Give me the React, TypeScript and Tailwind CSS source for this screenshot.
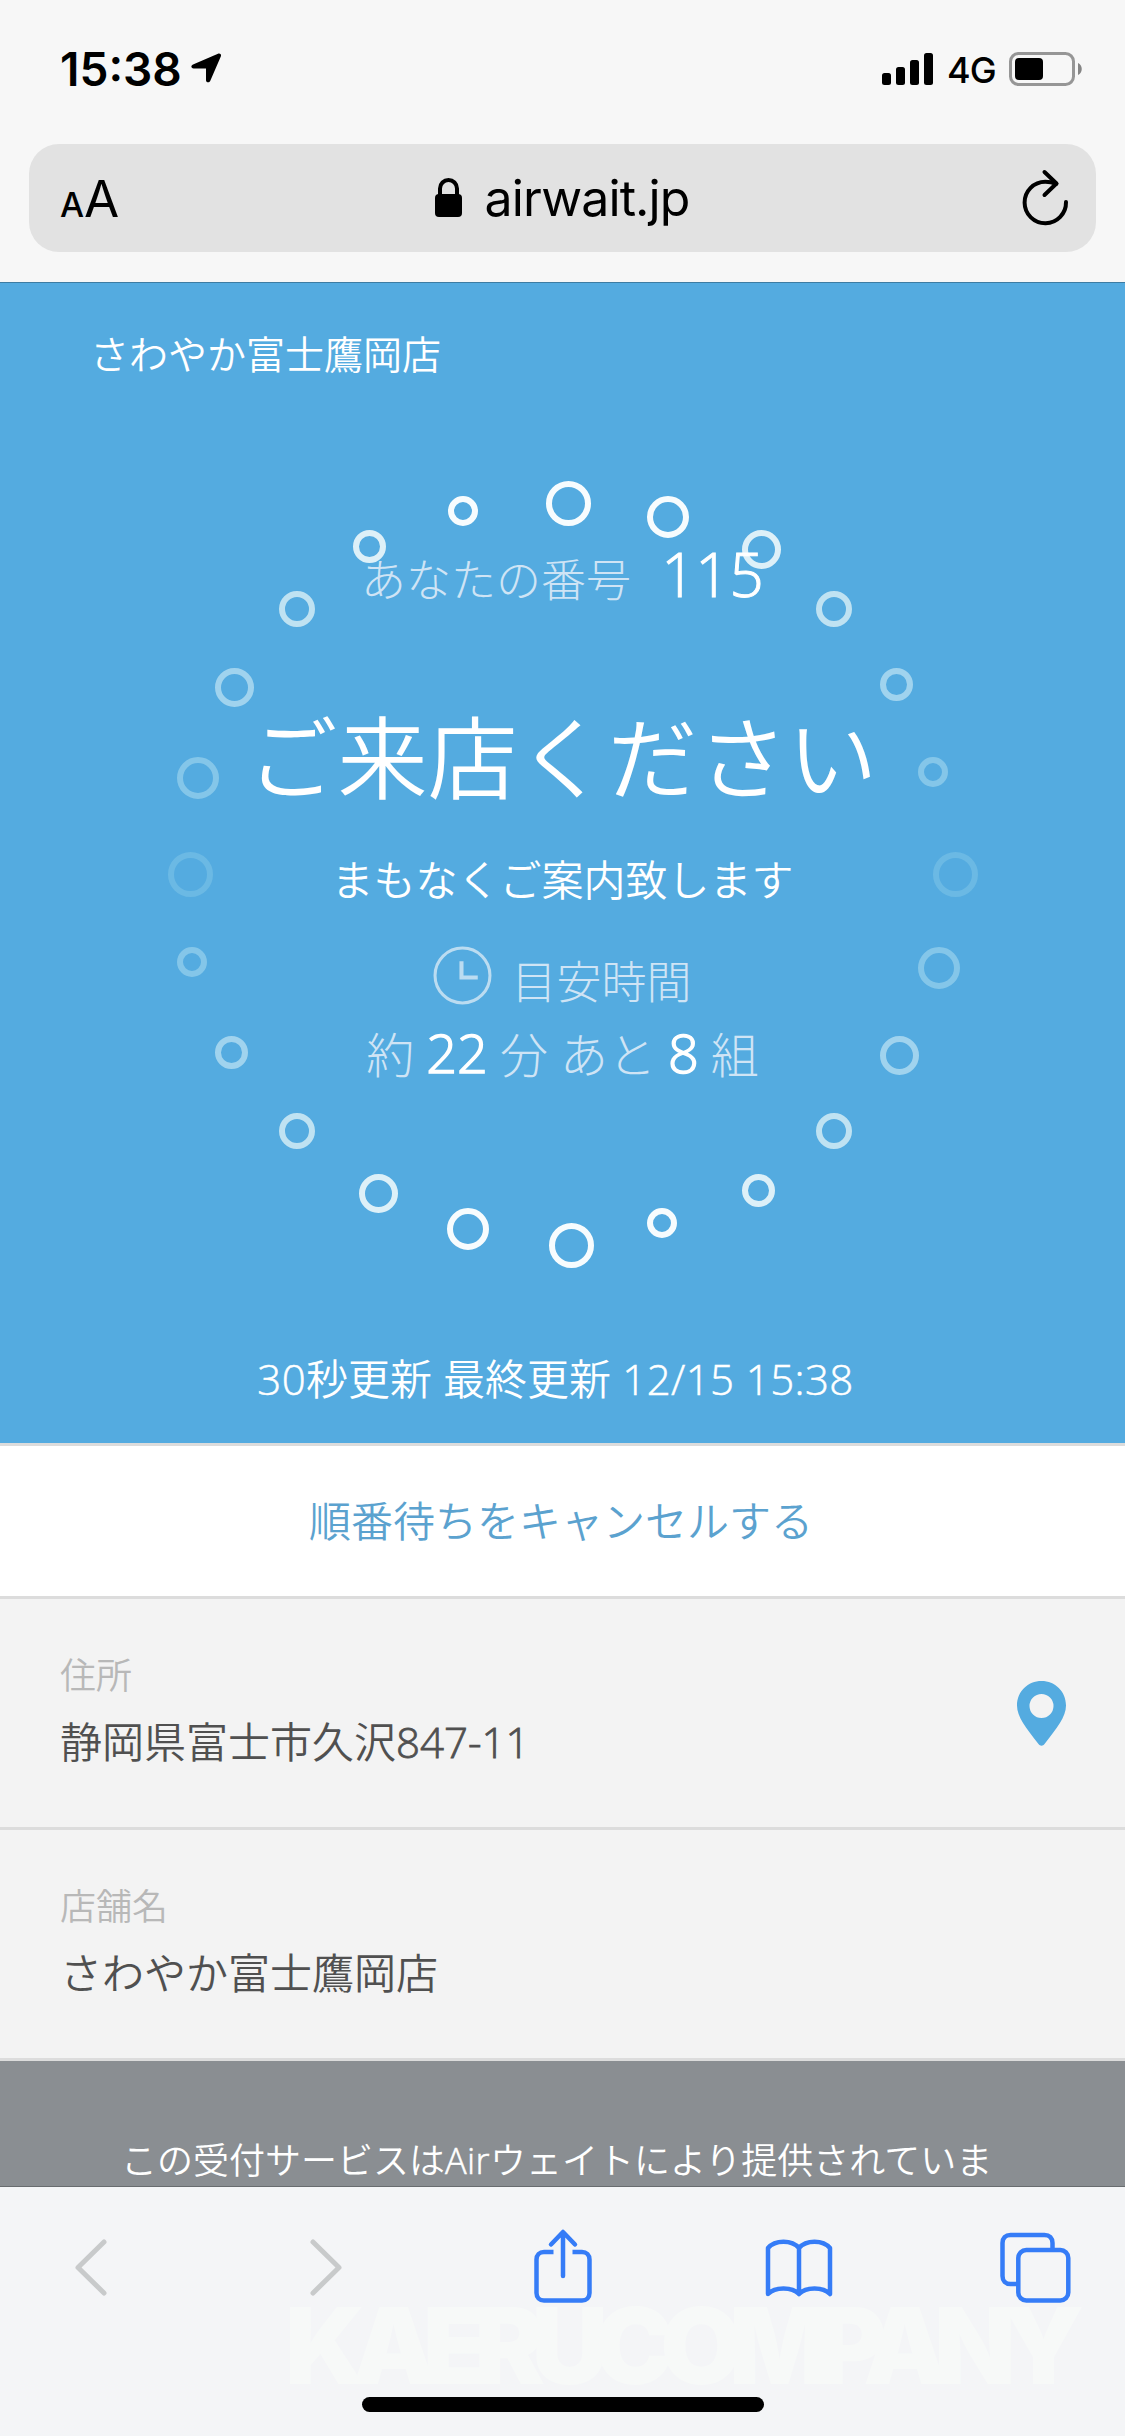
import React from "react";

type Ring = { x: number; y: number; d: number; c: string };

const TONES = ["#f7fcfe", "#ddf0f8", "#bfe2f2", "#a0d3ee", "#84c6e9", "#6bb9e4"];

// Bounding box corner and diameter of each ring, relative to the ring panel.
const RINGS: Ring[] = [
  { x: 378, y: 0, d: 45, c: TONES[0] },
  { x: 479, y: 15, d: 42, c: TONES[0] },
  { x: 574, y: 49, d: 39, c: TONES[1] },
  { x: 648, y: 110, d: 36, c: TONES[2] },
  { x: 712, y: 187, d: 33, c: TONES[3] },
  { x: 750, y: 276, d: 30, c: TONES[4] },
  { x: 765, y: 371, d: 45, c: TONES[5] },
  { x: 750, y: 466, d: 42, c: TONES[4] },
  { x: 712, y: 555, d: 39, c: TONES[3] },
  { x: 648, y: 632, d: 36, c: TONES[2] },
  { x: 574, y: 693, d: 33, c: TONES[1] },
  { x: 479, y: 727, d: 30, c: TONES[0] },
  { x: 381, y: 742, d: 45, c: TONES[0] },
  { x: 279, y: 727, d: 42, c: TONES[0] },
  { x: 191, y: 693, d: 39, c: TONES[1] },
  { x: 111, y: 632, d: 36, c: TONES[2] },
  { x: 47, y: 555, d: 33, c: TONES[3] },
  { x: 9, y: 466, d: 30, c: TONES[4] },
  { x: 0, y: 371, d: 45, c: TONES[5] },
  { x: 9, y: 276, d: 42, c: TONES[4] },
  { x: 47, y: 187, d: 39, c: TONES[3] },
  { x: 111, y: 110, d: 36, c: TONES[2] },
  { x: 185, y: 49, d: 33, c: TONES[1] },
  { x: 280, y: 15, d: 30, c: TONES[0] },
];

function StatusBar() {
  return (
    <div className="flex h-[144px] items-start justify-between pl-[60px] pr-[43px] pt-[39px] font-['Inter',sans-serif] text-black">
      <div className="flex h-[60px] items-center">
        <span className="w-[119px] whitespace-nowrap text-[46px] font-semibold leading-[60px]">15:38</span>
        <svg className="ml-[12px] mt-[-2px] h-[30px] w-[31px]" viewBox="0 0 31 30">
          <path d="M2 11.4 27 .8c2-.8 3.6.6 2.8 2.6L19.2 28c-.9 2-4.2 1.600-4.200-.800V15.400H2.600C-.1 15.400-.4 12.400 2 11.400Z" fill="#000" />
        </svg>
      </div>
      <div className="flex h-[60px] items-center">
        <svg className="h-[32px] w-[51px]" viewBox="0 0 51 32">
          <rect x="0" y="20" width="9" height="12" rx="2.500" />
          <rect x="14" y="14" width="9" height="18" rx="2.500" />
          <rect x="28" y="7" width="9" height="25" rx="2.500" />
          <rect x="42" y="0" width="9" height="32" rx="2.500" />
        </svg>
        <span className="ml-[14px] mt-[2px] w-[62px] whitespace-nowrap text-[36px] font-[450] leading-[60px] tracking-[-1px]">4G</span>
        <svg className="h-[34px] w-[73px]" viewBox="0 0 73 34">
          <rect x="1.500" y="1.500" width="63" height="31" rx="8" fill="none" stroke="#969696" strokeWidth="3" />
          <rect x="6" y="6" width="28" height="22" rx="4" />
          <path d="M69 11c5 2 5 10 0 12Z" fill="#858585" />
        </svg>
      </div>
    </div>
  );
}

function AddressBar() {
  return (
    <div className="mx-[29px] flex h-[108px] items-center justify-between rounded-[30px] bg-[#e2e2e2] pl-[31px] pr-[27px] font-['Inter',sans-serif] text-black">
      <div className="flex w-[120px] items-baseline">
        <span className="text-[34px] font-medium leading-none">A</span>
        <span className="text-[51px] leading-none">A</span>
      </div>
      <div className="mr-[5px] flex items-center">
        <svg className="mt-[-1px] h-[39px] w-[27px]" viewBox="0 0 27 39">
          <rect x="0" y="16" width="27" height="23" rx="4" />
          <path d="M5 18v-7.500a8.500 8.500 0 0 1 17 0V18" fill="none" stroke="#000" strokeWidth="4" />
        </svg>
        <span className="ml-[23px] w-[205px] whitespace-nowrap text-[50px] font-[370] leading-none tracking-[-0.9px]">airwait.jp</span>
      </div>
      <div className="flex w-[120px] justify-end">
        <svg className="h-[60px] w-[50px]" viewBox="0 0 50 60" fill="none" stroke="#000" strokeWidth="4" strokeLinecap="round" strokeLinejoin="round">
          <path d="M47 34a20.700 20.700 0 1 1-20.700-20.200c4 0 7 .5 11 2" />
          <path d="m25.500 4 12 11.500-12 11.500" />
        </svg>
      </div>
    </div>
  );
}

function WaitPanel() {
  return (
    <section className="relative h-[1160px] bg-[#54abe0] text-white">
      <svg className="absolute left-[168px] top-[198px] h-[787px] w-[810px]" viewBox="0 0 810 787" fill="none">
        {RINGS.map((r, i) => (
          <circle key={i} cx={r.x + r.d / 2} cy={r.y + r.d / 2} r={r.d / 2 - 3} stroke={r.c} strokeWidth="6" />
        ))}
      </svg>
      <div className="relative flex flex-col items-center whitespace-nowrap pt-[41px] font-[350]">
        <h1 className="self-start pl-[90px] text-[39px] leading-[60px]">さわやか富士鷹岡店</h1>
        <p className="mt-[160px] flex h-[70px] items-baseline leading-[70px]">
          <span className="text-[45px] font-light text-[#cfe4f5]">あなたの番号</span>
          <span className="ml-[30px] text-[60px] leading-[60px] [-webkit-text-stroke:1px_white]">115</span>
        </p>
        <p className="mt-[88px] text-[90px] leading-[110px]">ご来店ください</p>
        <p className="mt-[38px] text-[42px] leading-[60px]">まもなくご案内致します</p>
        <p className="mt-[42px] flex h-[60px] items-center text-[45px] font-light leading-[60px] text-[#cfe4f5]">
          <svg className="mt-[-14px] h-[59px] w-[59px]" viewBox="0 0 58 58" fill="none" stroke="#bbdcf1">
            <circle cx="29" cy="29" r="27" strokeWidth="3" />
            <path d="M28 15v16h16" strokeWidth="4" />
          </svg>
          <span className="ml-[19px]">目安時間</span>
        </p>
        <p className="mt-[13px] flex h-[60px] items-baseline gap-3 text-[48px] font-light leading-[60px] text-[#cfe4f5]">
          <span>約</span>
          <span className="text-[54px] leading-[50px] text-white [-webkit-text-stroke:1.4px_white]">22</span>
          <span>分</span>
          <span>あと</span>
          <span className="text-[54px] leading-[50px] text-white [-webkit-text-stroke:1.4px_white]">8</span>
          <span>組</span>
        </p>
        <p className="mr-[14px] mt-[264px] text-[42px] leading-[60px]">
          <span className="tracking-[0.4px] [-webkit-text-stroke:0.5px_white]">30</span>
          秒更新 最終更新
          <span className="tracking-[0.4px] [-webkit-text-stroke:0.5px_white]"> 12/15 15:38</span>
        </p>
      </div>
    </section>
  );
}

function InfoRow({
  label,
  value,
  digits,
  children,
}: {
  label: string;
  value: string;
  digits?: string;
  children?: React.ReactNode;
}) {
  return (
    <div className="flex h-[231px] items-start justify-between border-b-[3px] border-[#dcdcdc] bg-[#f3f3f3] pl-[60px] pr-[59px]">
      <div className="pt-[52px] font-[350]">
        <p className="text-[36px] leading-[50px] text-[#b8b8b8]">{label}</p>
        <p className="mt-[11px] text-[42px] leading-[60px] text-[#505050]">
          {value}
          {digits && <span className="[-webkit-text-stroke:0.8px_#505050]">{digits}</span>}
        </p>
      </div>
      {children}
    </div>
  );
}

function Toolbar() {
  return (
    <nav className="relative h-[250px] border-t border-[#686c6f] bg-[#f4f5f7]">
      <span className="absolute left-[285px] top-[104px] font-['Inter',sans-serif] text-[106px] font-black leading-[110px] tracking-[-13.500px] text-[#f7f9f8]">
        KAERUCOMPANY
      </span>
      <div className="relative flex h-[160px] items-center justify-between pl-[55px] pr-[54px]">
        <span className="flex w-[71px] justify-center">
          <svg className="h-[80px] w-[33px]" viewBox="0 0 33 80" fill="none" stroke="#c8cacb" strokeWidth="5" strokeLinecap="round" strokeLinejoin="round">
            <path d="M30 15 4 40.500 30 66" />
          </svg>
        </span>
        <span className="flex w-[71px] justify-center">
          <svg className="h-[80px] w-[33px]" viewBox="0 0 33 80" fill="none" stroke="#c8cacb" strokeWidth="5" strokeLinecap="round" strokeLinejoin="round">
            <path d="m3 15 26 25.500L3 66" />
          </svg>
        </span>
        <span className="flex w-[71px] justify-center">
          <svg className="h-[80px] w-[58px]" viewBox="0 0 58 80" fill="none" stroke="#357cf7" strokeWidth="4.500">
            <path d="M19.500 25H10c-4.500 0-7.500 3-7.500 7.500V66c0 4.500 3 7.500 7.500 7.500h38c4.500 0 7.500-3 7.500-7.500V32.500c0-4.500-3-7.500-7.500-7.500h-9.500" />
            <path d="M29 6v43M17 17.500 29 5l12 12.500" strokeLinecap="round" strokeLinejoin="round" />
          </svg>
        </span>
        <span className="flex w-[71px] justify-center">
          <svg className="h-[80px] w-[68px]" viewBox="0 0 68 80" fill="none" stroke="#357cf7" strokeWidth="4.500" strokeLinecap="round" strokeLinejoin="round">
            <path d="M34 21c-7-8.500-24-8.500-31 0v46c7-7.500 24-7.500 31 0 7-7.500 24-7.500 31 0V21c-7-8.500-24-8.500-31 0v46" />
          </svg>
        </span>
        <svg className="h-[80px] w-[71px]" viewBox="0 0 71 80" fill="none" stroke="#357cf7" strokeWidth="4.500">
          <path d="M18 57h-7.500c-5 0-8-3-8-8V16c0-5 3-8 8-8h34c5 0 8 3 8 8v7.500" />
          <rect x="18.300" y="23" width="50" height="50.500" rx="8" />
        </svg>
      </div>
      <div className="relative mx-auto mt-[50px] h-[15px] w-[402px] rounded-full bg-black" />
    </nav>
  );
}

export default function App() {
  return (
    <div className="flex h-[2436px] w-[1125px] flex-col overflow-hidden bg-[#f7f7f7] font-['Open_Sans','Noto_Sans_CJK_JP',sans-serif]" lang="ja">
      <header className="h-[283px] border-b border-[#3d7ca3]">
        <StatusBar />
        <AddressBar />
      </header>
      <WaitPanel />
      <button className="flex h-[156px] w-full items-center justify-center border-y-[3px] border-[#dcdcdc] bg-white pr-[3px] text-[42px] font-[350] leading-[60px] text-[#5ba2cf]">
        順番待ちをキャンセルする
      </button>
      <InfoRow label="住所" value="静岡県富士市久沢" digits="847-11">
        <svg className="mt-[82px] h-[65px] w-[49px]" viewBox="0 0 49 65">
          <path fillRule="evenodd" fill="#54abe0" d="M24.500 0C11 0 0 10.500 0 24.500 0 36 9 47 21.500 63c1.500 2.300 4.500 2.300 6 0C40 47 49 36 49 24.500 49 10.500 38 0 24.500 0Zm0 13a12 12 0 1 1 0 24 12 12 0 0 1 0-24Z" />
        </svg>
      </InfoRow>
      <InfoRow label="店舗名" value="さわやか富士鷹岡店" />
      <footer className="h-[125px] whitespace-nowrap bg-[#8a8e92] pl-[121px] pt-[75px] text-[36px] font-[350] leading-[50px] text-white">
        この受付サービスは<span className="tracking-[0.4px] [-webkit-text-stroke:0.5px_white]">Air</span>ウェイトにより提供されていま
      </footer>
      <Toolbar />
    </div>
  );
}
